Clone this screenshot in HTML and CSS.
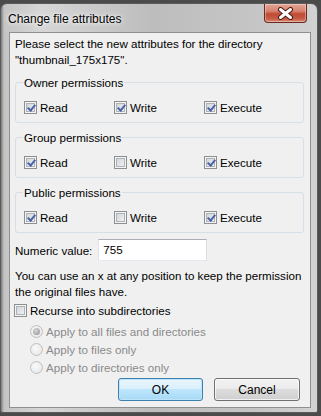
FILE: index.html
```html
<!DOCTYPE html>
<html lang="en">
<head>
    <meta charset="UTF-8" />
    <meta name="viewport" content="width=device-width, initial-scale=1.0" />
    <title>Change file attributes</title>
    <link rel="stylesheet" href="styles.css">
</head>
<body>
    <div class="window">
        <div class="titlebar">
            <span class="title">Change file attributes</span>
            <span class="close">
                <svg width="17" height="13" viewBox="0 0 17 13">
                    <path d="M3.5 2.5 L13.5 10.5 M13.5 2.5 L3.5 10.5" stroke="#4a1a12" stroke-width="5" stroke-linecap="round" fill="none"/>
                    <path d="M3.5 2.5 L13.5 10.5 M13.5 2.5 L3.5 10.5" stroke="#ffffff" stroke-width="3" stroke-linecap="round" fill="none"/>
                </svg>
            </span>
        </div>

        <div class="client">
            <p class="intro">Please select the new attributes for the directory<br>"thumbnail_175x175".</p>

            <!-- Permission groups -->
            <fieldset class="group">
                <legend>Owner permissions</legend>
                <div class="perm-row">
                    <label class="check"><span class="box on"></span>Read</label>
                    <label class="check"><span class="box on"></span>Write</label>
                    <label class="check"><span class="box on"></span>Execute</label>
                </div>
            </fieldset>

            <fieldset class="group">
                <legend>Group permissions</legend>
                <div class="perm-row">
                    <label class="check"><span class="box on"></span>Read</label>
                    <label class="check"><span class="box"></span>Write</label>
                    <label class="check"><span class="box on"></span>Execute</label>
                </div>
            </fieldset>

            <fieldset class="group">
                <legend>Public permissions</legend>
                <div class="perm-row">
                    <label class="check"><span class="box on"></span>Read</label>
                    <label class="check"><span class="box"></span>Write</label>
                    <label class="check"><span class="box on"></span>Execute</label>
                </div>
            </fieldset>

            <div class="numeric">
                <span class="numeric-label">Numeric value:</span>
                <span class="textbox">755</span>
            </div>

            <p class="hint">You can use an x at any position to keep the permission<br>the original files have.</p>

            <label class="check recurse"><span class="box"></span>Recurse into subdirectories</label>

            <div class="radios">
                <label class="radio"><span class="dot on"></span>Apply to all files and directories</label>
                <label class="radio"><span class="dot"></span>Apply to files only</label>
                <label class="radio"><span class="dot"></span>Apply to directories only</label>
            </div>

            <div class="buttons">
                <button class="btn default">OK</button>
                <button class="btn">Cancel</button>
            </div>
        </div>
    </div>
</body>
</html>
```

FILE: styles.css
```css
body {
    margin: 0;
    background-color: #4b4b4b;
    font-family: "Liberation Sans", Arial, sans-serif;
    font-size: 11.6px;
    color: #000;
}

.window {
    width: 318px;
    height: 410px;
    margin-top: 3px;
    box-sizing: border-box;
    padding: 0 6px 4px 8px;
    border: 1px solid #5a5a5a;
    border-radius: 7px 7px 2px 2px;
    background: linear-gradient(90deg, #7a7a7a 0, #c4c4c4 3px, #d6d6d6 40px, #bdbdbd 150px, #c6c6c6 260px, #d2d2d2 100%);
    display: flex;
    flex-direction: column;
}

/* Title bar */
.titlebar {
    height: 28px;
    display: flex;
    justify-content: space-between;
    align-items: flex-start;
    margin-left: -1px;
}

.title {
    margin-top: 8px;
    font-size: 12px;
    text-shadow: 0 0 6px #fff, 0 0 3px #fff;
}

.close {
    width: 41px;
    height: 18px;
    margin-right: 4px;
    border: 1px solid #6b2a20;
    border-top: none;
    border-radius: 0 0 4px 4px;
    background: linear-gradient(180deg, #e3a596 0, #d6826f 40%, #c04a33 55%, #c65a43 80%, #d98a75 100%);
    box-shadow: inset 0 0 0 1px rgba(255, 255, 255, 0.35);
    display: flex;
    justify-content: center;
    align-items: center;
}

/* Client area */
.client {
    flex: 1;
    background-color: #f0f0f0;
    border: 1px solid #8e8f8f;
    padding: 3px 6px 0 5px;
}

.intro {
    margin: 0;
    line-height: 16px;
}

.group {
    margin: 7px 0 0;
    padding: 9px 0 7px 8px;
    border: 1px solid #d5dfe5;
    border-radius: 3px;
}

.group + .group {
    margin-top: 7px;
}

.group legend {
    padding: 0 1px;
    margin-left: -1px;
    line-height: 15px;
}

.perm-row {
    display: grid;
    grid-template-columns: 90px 90px 90px;
}

.check {
    display: flex;
    align-items: center;
    height: 16px;
    gap: 3px;
}

.box {
    width: 11px;
    height: 11px;
    border: 1px solid #8e8f8f;
    box-shadow: inset 0 0 0 1px #f4f4f4, inset 0 0 0 2px #aeb3b9;
    background: linear-gradient(135deg, #cbcfd5, #f7f7f7);
    display: inline-block;
    position: relative;
}

.box.on::after {
    content: "";
    position: absolute;
    left: 4px;
    top: 1px;
    width: 3px;
    height: 6px;
    border: solid #4a63a8;
    border-width: 0 2px 2px 0;
    transform: rotate(40deg);
}

/* Numeric value */
.numeric {
    display: flex;
    align-items: center;
    margin-top: 6px;
    gap: 6px;
}

.textbox {
    width: 103px;
    height: 20px;
    line-height: 20px;
    padding-left: 4px;
    background-color: #fff;
    border: 1px solid #abadb3;
    border-color: #abadb3 #dbdfe6 #e3e9ef #e2e3ea;
}

.hint {
    margin: 7px 0 0;
    line-height: 16px;
    white-space: nowrap;
}

.recurse {
    margin-top: 2px;
    margin-left: -1px;
}

/* Radio buttons (disabled) */
.radios {
    margin-top: 5px;
    padding-left: 15px;
    display: flex;
    flex-direction: column;
    gap: 2px;
}

.radio {
    display: flex;
    align-items: center;
    height: 16px;
    gap: 3px;
    color: #8a8a8a;
}

.dot {
    width: 11px;
    height: 11px;
    border: 1px solid #c0c0c0;
    border-radius: 50%;
    background: radial-gradient(circle at 40% 40%, #fafafa, #e2e2e2);
    position: relative;
}

.dot.on::after {
    content: "";
    position: absolute;
    left: 2px;
    top: 2px;
    width: 7px;
    height: 7px;
    border-radius: 50%;
    background: radial-gradient(circle at 40% 35%, #d8d8d8, #8f8f8f);
}

/* Buttons */
.buttons {
    display: flex;
    justify-content: flex-end;
    gap: 11px;
    margin-top: 3px;
    padding-right: 4px;
}

.btn {
    width: 85px;
    height: 23px;
    font-family: inherit;
    font-size: 12px;
    color: #000;
    border: 1px solid #707070;
    border-radius: 3px;
    background: linear-gradient(180deg, #f2f2f2 0, #ebebeb 50%, #dddddd 50%, #cfcfcf 100%);
    box-shadow: inset 0 0 0 1px rgba(255, 255, 255, 0.7);
}

.btn + .btn {
    width: 86px;
}

.btn.default {
    border-color: #3c7fb1;
    background: linear-gradient(180deg, #eaf6fd 0, #d9f0fc 50%, #bee6fd 50%, #a7d9f5 100%);
    box-shadow: inset 0 0 0 1px #bfe3f8;
}
```
